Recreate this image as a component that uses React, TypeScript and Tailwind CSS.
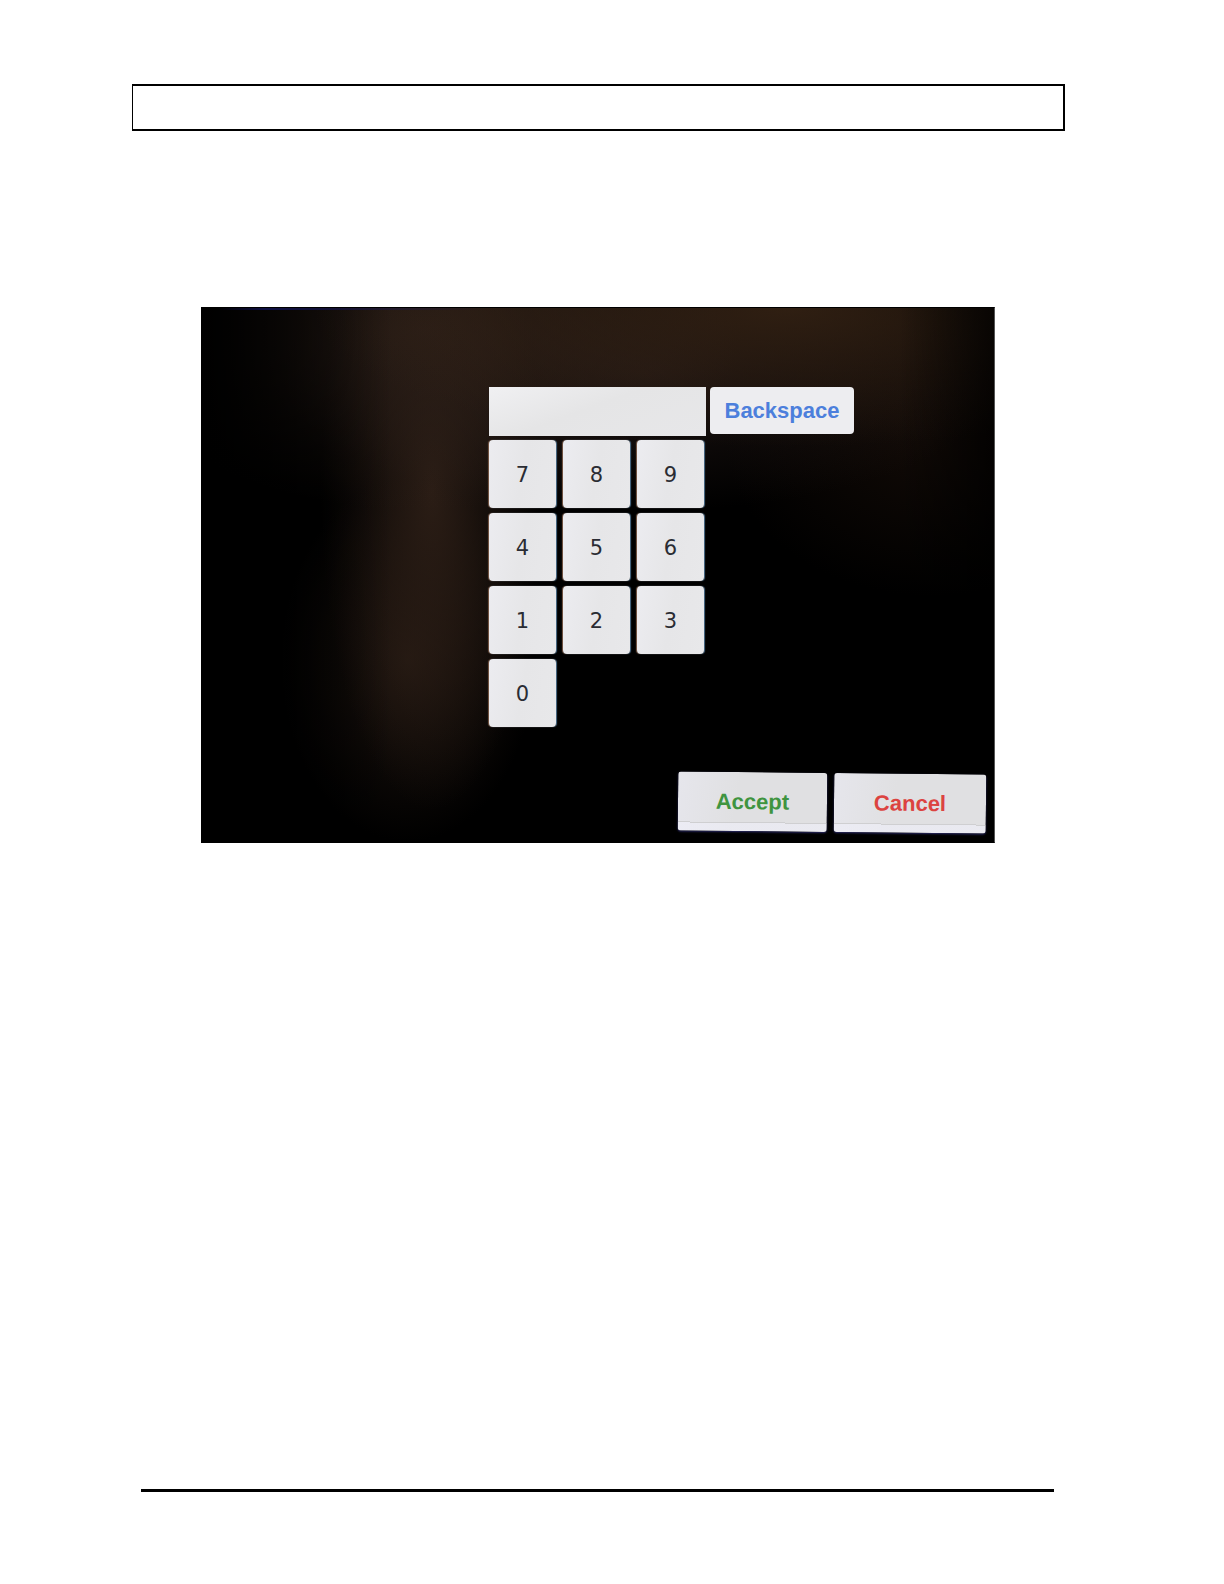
import React, { useState } from 'react';

const KEYS = ['7', '8', '9', '4', '5', '6', '1', '2', '3', '0'];

const keyClass =
  'h-[68px] rounded-[4px] bg-[linear-gradient(100deg,#ececf0,#e6e6e8_50%,#e8e8ea)] pt-0.5 text-[21px] leading-6 text-[#2a2c33] font-["DejaVu_Sans",sans-serif] shadow-[-1px_0_1px_#7a5a48,1px_0_1px_#4d6f8c]';
// flat grey face with a hairline scratch along the lower edge
const actionClass =
  'h-[59px] rounded-[3px] bg-[linear-gradient(180deg,transparent_50px,#cfcfd1_50px,#cfcfd1_51px,rgba(240,240,250,0.6)_51px),linear-gradient(100deg,#e6e6ec,#e0e0e2_40%,#e0e0e2)] text-[22px] leading-7 font-bold shadow-[0_1px_2px_#2a2a66]';

export default function App() {
  const [value, setValue] = useState('');

  return (
    <div className='flex min-h-screen flex-col bg-white pt-[84px] pb-[92px] font-["Liberation_Sans",Arial,sans-serif]'>
      <header className="mr-[159px] ml-[132px] h-[47px] border-y-2 border-r-2 border-l border-black" />

      <main className="mt-44 mr-[229px] ml-[201px] grow">
        <section
          aria-label="Keypad"
          className="border border-black border-r-[#555] bg-black bg-[linear-gradient(90deg,transparent_2%,rgba(20,22,110,0.6)_8%,transparent_36%),linear-gradient(90deg,#000_0%,transparent_24%,transparent_88%,rgba(0,0,0,0.7)_100%),radial-gradient(ellipse_60%_26%_at_74%_0%,rgba(54,35,20,0.85),transparent),radial-gradient(ellipse_40%_34%_at_28%_4%,rgba(44,31,24,0.85),transparent),radial-gradient(ellipse_14%_60%_at_29%_34%,rgba(50,34,25,0.85),transparent),radial-gradient(ellipse_16%_34%_at_26%_66%,rgba(38,26,19,0.8),transparent),radial-gradient(ellipse_46%_26%_at_56%_12%,rgba(34,24,22,0.8),transparent),radial-gradient(ellipse_26%_30%_at_92%_24%,rgba(22,13,8,0.8),transparent)] bg-[length:100%_2px,auto,auto,auto,auto,auto,auto,auto] bg-no-repeat pt-[79px] pr-2 pb-[11px] pl-[287px]"
        >
          <div className="flex items-start gap-1">
            <input
              type="text"
              aria-label="Value"
              value={value}
              onChange={(e) => setValue(e.target.value)}
              className="h-[49px] w-[217px] bg-[linear-gradient(160deg,#f0f0f2,#e5e5e6_45%,#e7e7e9)] px-3 text-[22px] text-[#2a2c33] outline-none"
            />
            <button
              type="button"
              onClick={() => setValue((v) => v.slice(0, -1))}
              className="h-[47px] w-36 rounded-[4px] bg-[#ededf0] text-[22px] leading-7 font-bold text-[#4c7fdc]"
            >
              Backspace
            </button>
          </div>

          <div className="mt-1 grid w-[215px] grid-cols-[67px_67px_67px] justify-between gap-y-[5px]">
            {KEYS.map((k) => (
              <button key={k} type="button" onClick={() => setValue((v) => v + k)} className={keyClass}>
                {k}
              </button>
            ))}
          </div>

          <div className="mt-[45px] flex rotate-[0.6deg] justify-end gap-[7px]">
            <button type="button" className={`${actionClass} w-[149px] text-[#3f9440]`}>
              Accept
            </button>
            <button type="button" onClick={() => setValue('')} className={`${actionClass} w-[152px] text-[#dc4340]`}>
              Cancel
            </button>
          </div>
        </section>
      </main>

      <footer className="mr-[170px] ml-[141px] border-t-3 border-black" />
    </div>
  );
}
